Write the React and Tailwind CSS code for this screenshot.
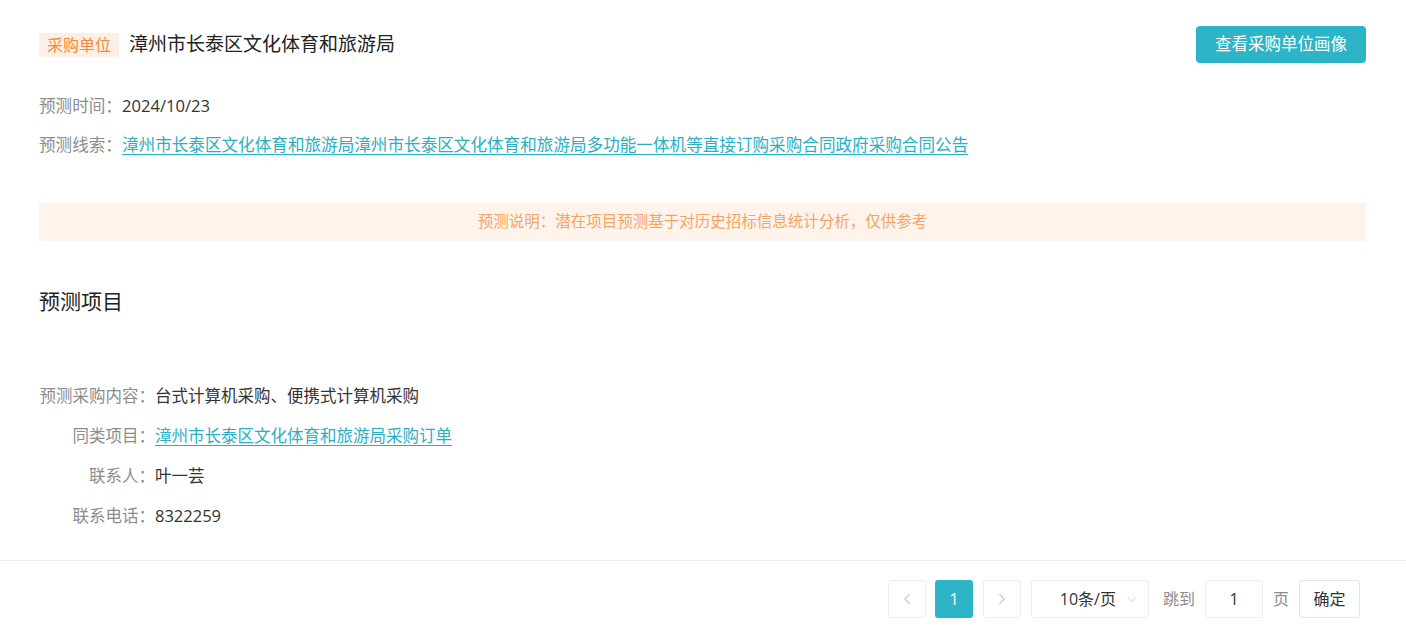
import { ChevronLeft, ChevronRight, ChevronDown } from "lucide-react";

const FONT = { fontFamily: '"Open Sans", "Noto Sans CJK SC", "Noto Sans", sans-serif' };

const details = [
  { label: "预测采购内容：", value: "台式计算机采购、便携式计算机采购" },
  { label: "同类项目：", value: "漳州市长泰区文化体育和旅游局采购订单", link: true },
  { label: "联系人：", value: "叶一芸" },
  { label: "联系电话：", value: "8322259" },
];

export default function App() {
  return (
    <div className="bg-white w-[1406px] min-h-[640px] text-[#333]" style={FONT}>
      <div className="px-[39px] pt-[26px] pr-[40px]">
        {/* header */}
        <div className="flex items-center justify-between h-[37px]">
          <div className="flex items-center">
            <span className="bg-[#fdefe4] text-[#f28a3a] text-[16px] leading-[24px] px-[8px] rounded-[2px]">
              采购单位
            </span>
            <span className="ml-[10px] text-[19px] text-[#222]">漳州市长泰区文化体育和旅游局</span>
          </div>
          <button className="h-[37px] w-[170px] rounded-[4px] bg-[#2db5c7] text-white text-[16.5px]">
            查看采购单位画像
          </button>
        </div>

        <div className="mt-[31px] flex flex-col gap-[15px] text-[16.6px] leading-[24px]">
          <div className="flex">
            <span className="text-[#8c8c8c]">预测时间：</span>
            <span className="text-[#333]">2024/10/23</span>
          </div>
          <div className="flex">
            <span className="text-[#8c8c8c]">预测线索：</span>
            <a className="text-[#2aafc2] underline underline-offset-[3px] cursor-pointer">
              漳州市长泰区文化体育和旅游局漳州市长泰区文化体育和旅游局多功能一体机等直接订购采购合同政府采购合同公告
            </a>
          </div>
        </div>

        <div className="mt-[46px] h-[38px] bg-[#fef4ec] flex items-center justify-center text-[#f4a563] text-[15.5px]">
          预测说明：潜在项目预测基于对历史招标信息统计分析，仅供参考
        </div>

        <h2 className="mt-[46px] text-[21px] leading-[28px] text-[#222]">预测项目</h2>

        <div className="mt-[69px] flex flex-col gap-[16px] text-[16.5px] leading-[24px]">
          {details.map((d) => (
            <div key={d.label} className="flex">
              <span className="w-[116px] text-right text-[#8c8c8c] shrink-0">{d.label}</span>
              {d.link ? (
                <a className="text-[#2aafc2] underline underline-offset-[3px] cursor-pointer">{d.value}</a>
              ) : (
                <span className="text-[#333]">{d.value}</span>
              )}
            </div>
          ))}
        </div>
      </div>

      <div className="mt-[32px] border-t border-[#ececec] pt-[19px] pb-[22px] pr-[46px] flex justify-end items-center text-[16px]">
        <div className="w-[38px] h-[38px] border border-[#eeeeee] rounded-[3px] flex items-center justify-center text-[#c8c8c8]">
          <ChevronLeft size={18} strokeWidth={1.5} />
        </div>
        <div className="ml-[9px] w-[38px] h-[38px] rounded-[3px] bg-[#2db5c7] text-white flex items-center justify-center">
          1
        </div>
        <div className="ml-[10px] w-[38px] h-[38px] border border-[#eeeeee] rounded-[3px] flex items-center justify-center text-[#c8c8c8]">
          <ChevronRight size={18} strokeWidth={1.5} />
        </div>
        <div className="ml-[10px] w-[118px] h-[38px] border border-[#eeeeee] rounded-[3px] flex items-center justify-end pr-[9px] gap-[8px] text-[#333]">
          <span>10条/页</span>
          <ChevronDown size={15} strokeWidth={1.5} className="text-[#cccccc]" />
        </div>
        <span className="ml-[14px] text-[#8c8c8c]">跳到</span>
        <div className="ml-[10px] w-[58px] h-[38px] border border-[#eeeeee] rounded-[3px] flex items-center justify-center text-[#333]">
          1
        </div>
        <span className="ml-[10px] text-[#8c8c8c]">页</span>
        <button className="ml-[10px] w-[61px] h-[38px] border border-[#e4e4e4] rounded-[3px] text-[#333]">
          确定
        </button>
      </div>
    </div>
  );
}
